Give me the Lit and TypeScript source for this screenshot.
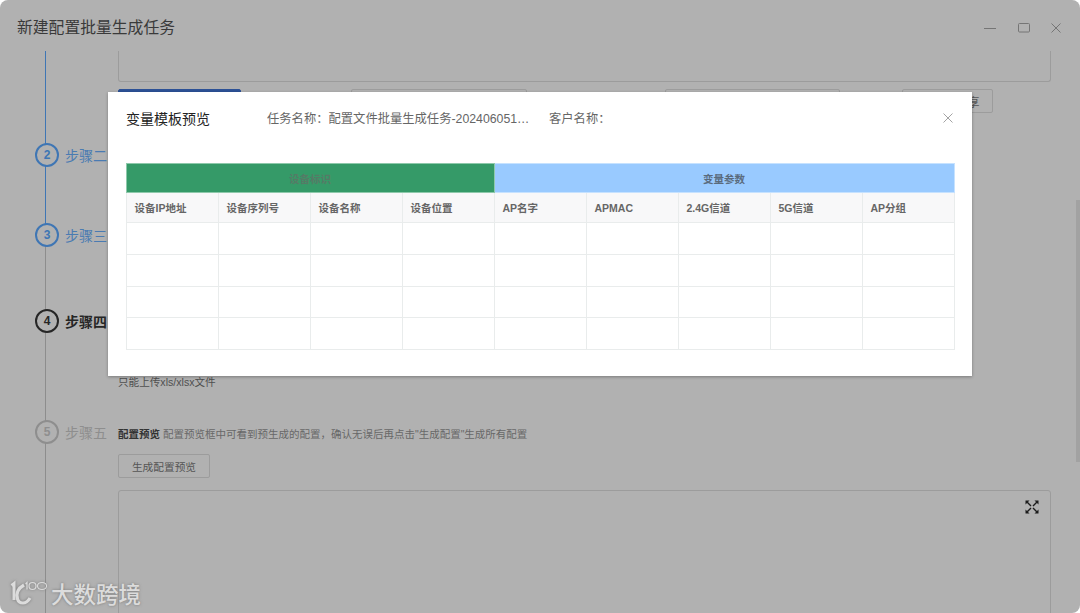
import { LitElement, css, html, svg } from "lit";
import { customElement } from "lit/decorators.js";

const columns = [
  "设备IP地址",
  "设备序列号",
  "设备名称",
  "设备位置",
  "AP名字",
  "APMAC",
  "2.4G信道",
  "5G信道",
  "AP分组",
];

const steps = [
  { n: 2, label: "步骤二", state: "done", gap: 0 },
  { n: 3, label: "步骤三", state: "done", gap: 58 },
  { n: 4, label: "步骤四", state: "active", gap: 64 },
  { n: 5, label: "步骤五", state: "todo", gap: 89 },
];

@customElement("app-root")
export class AppRoot extends LitElement {
  static styles = css`
    :host {
      display: block;
      position: relative;
      width: 1080px;
      height: 613px;
      overflow: hidden;
      background: #fff;
      font-family: "Liberation Sans", "Noto Sans CJK SC", sans-serif;
    }

    /* window behind the mask */
    .window {
      height: 613px;
      display: flex;
      flex-direction: column;
      background: #b1b1b1;
      border-radius: 8px;
      overflow: hidden;
    }
    .titlebar {
      flex: none;
      height: 51px;
      display: flex;
      align-items: center;
      padding: 4px 18px 0 17px;
      box-sizing: border-box;
    }
    .titlebar h1 {
      flex: 1;
      margin: -2px 0 0;
      font-size: 15.8px;
      font-weight: 400;
      color: #3a3a3a;
    }
    .controls {
      display: flex;
      align-items: center;
      gap: 20px;
    }
    .controls svg {
      display: block;
      width: 12px;
      height: 12px;
      fill: none;
      stroke: #757575;
      stroke-width: 1;
    }
    .controls svg:first-child {
      margin-right: 2px;
    }
    .body {
      flex: 1;
      display: flex;
      min-height: 0;
    }

    /* stepper */
    .rail {
      flex: none;
      width: 118px;
      position: relative;
      padding: 93px 0 0 35px;
      box-sizing: border-box;
    }
    .line {
      position: absolute;
      left: 45px;
      top: 0;
      bottom: 0;
      width: 1px;
      background: #8d8d8d;
    }
    .line::before {
      content: "";
      position: absolute;
      left: 0;
      top: 0;
      width: 1px;
      height: 190px;
      background: #3f76b4;
    }
    .step {
      position: relative;
      height: 22px;
      display: flex;
      align-items: center;
      gap: 6px;
      font-size: 14px;
      white-space: nowrap;
    }
    .num {
      flex: none;
      width: 20px;
      height: 20px;
      border: 2px solid;
      border-radius: 50%;
      background: #b1b1b1;
      display: flex;
      align-items: center;
      justify-content: center;
      font-size: 12px;
      font-weight: 700;
    }
    .step.done {
      color: #4a7bb2;
    }
    .step.done .num {
      border-color: #3f76b4;
      color: #3f76b4;
    }
    .step.active {
      color: #262626;
      font-weight: 700;
    }
    .step.active .num {
      border-color: #262626;
      color: #262626;
    }
    .step.todo {
      color: #8e8e8e;
    }
    .step.todo .num {
      border-color: #8e8e8e;
      color: #8e8e8e;
    }

    /* page content behind the mask */
    .content {
      flex: none;
      width: 933px;
      font-size: 12px;
      color: #5c5c5c;
    }
    .box {
      border: 1px solid #9c9c9c;
      border-radius: 3px;
      box-sizing: border-box;
    }
    .box.top {
      height: 31px;
      border-top: 0;
      border-radius: 0 0 3px 3px;
    }
    .actions {
      position: relative;
      height: 24px;
      margin-top: 7px;
      display: flex;
    }
    .btn {
      height: 24px;
      box-sizing: border-box;
      border: 1px solid #9c9c9c;
      border-radius: 2px;
      background: transparent;
      color: #555;
      font: inherit;
      padding: 0;
    }
    .actions .primary {
      width: 123px;
      border-color: #2c5196;
      background: #2c5196;
    }
    .actions .second {
      width: 176px;
      margin-left: 110px;
    }
    .actions .third {
      width: 175px;
      margin-left: 138px;
    }
    .actions .fourth {
      width: 91px;
      margin-left: 62px;
      padding-left: 52px;
      text-align: center;
    }
    .hint {
      margin: 261px 0 0;
      line-height: 16px;
      font-size: 10.6px;
      color: #4f4f4f;
    }
    .desc {
      margin: 36px 0 0;
      line-height: 16px;
      font-size: 10.5px;
      color: #686868;
    }
    .desc b {
      color: #333;
    }
    .content > .btn {
      display: block;
      width: 92px;
      margin-top: 12px;
      font-size: 10.7px;
    }
    .box.preview {
      position: relative;
      height: 140px;
      margin-top: 12px;
    }
    .expand {
      position: absolute;
      right: 11px;
      top: 9px;
      width: 14px;
      height: 14px;
      display: block;
      fill: #1c1c1c;
    }
    .expand path + path {
      fill: none;
      stroke: #1c1c1c;
      stroke-width: 1.4;
    }

    .scrollbar {
      position: absolute;
      right: 0;
      top: 200px;
      width: 4px;
      height: 262px;
      background: #a2a2a2;
    }

    /* watermark */
    .mark {
      position: absolute;
      left: 9px;
      bottom: 7px;
      display: flex;
      align-items: center;
      gap: 4px;
      color: #dcdcdc;
      text-shadow: 0 0 3px #777;
      font-size: 22.5px;
      line-height: 26px;
      font-family: "Noto Sans CJK SC", sans-serif;
      font-weight: 500;
    }
    .mark svg {
      display: block;
      width: 38px;
      height: 26px;
      fill: none;
      stroke: #dcdcdc;
      filter: drop-shadow(0 0 1.5px #777);
    }

    /* modal */
    .modal {
      position: absolute;
      left: 108px;
      top: 92px;
      width: 864px;
      height: 284px;
      box-sizing: border-box;
      padding: 0 18px;
      background: #fff;
      box-shadow: 0 1px 3px rgba(0, 0, 0, 0.3);
    }
    .modal header {
      height: 71px;
      display: flex;
      align-items: center;
      padding-bottom: 20px;
      box-sizing: border-box;
      font-size: 12.3px;
      color: #666;
      white-space: nowrap;
    }
    .modal h2 {
      margin: 0 57px 0 0;
      font-size: 14px;
      font-weight: 400;
      color: #222;
    }
    .task {
      width: 264px;
      margin-right: 18px;
    }
    .customer {
      flex: 1;
    }
    .close {
      display: block;
      width: 10px;
      height: 10px;
      margin-right: 1px;
      fill: none;
      stroke: #a3a3a3;
      stroke-width: 1;
    }

    table {
      width: 829px;
      margin-left: -0.5px;
      border-collapse: collapse;
      table-layout: fixed;
      font-size: 10.5px;
      color: #666;
    }
    th,
    td {
      border: 1px solid #e9ecec;
      padding: 0 8px;
      text-align: left;
      font-weight: 700;
      box-sizing: border-box;
    }
    .groups th {
      height: 29px;
      text-align: center;
      border-color: #c6e2ff;
    }
    .groups .device {
      background: #359a68;
      border-color: #8ec9ab;
      color: #557a66;
    }
    .groups .vars {
      background: #99caff;
      color: #5a6b7d;
    }
    .heads th {
      height: 30px;
      background: #f8f8f9;
    }
    .rows td {
      height: 32px;
    }
    .rows:nth-child(3) td {
      height: 31px;
    }
  `;

  private renderStep(s: (typeof steps)[number]) {
    return html`<div class="step ${s.state}" style="margin-top:${s.gap}px">
      <span class="num">${s.n}</span><span>${s.label}</span>
    </div>`;
  }

  private renderLogo() {
    return html`<svg viewBox="0 0 38 26" aria-hidden="true">
      ${svg`
        <path stroke-width="3" d="M2.5 5.5 L5 3.5 L5 20" />
        <path stroke-width="3.2" d="M15 5 C8 9 7 14 8.5 19 C10 24 17 25 21 18" />
        <path stroke-width="1.2" d="M16.5 4 L18 2.5 V9.5" />
        <circle stroke-width="1.2" cx="23.5" cy="6" r="3.5" />
        <ellipse stroke-width="1.2" cx="33" cy="6" rx="4.5" ry="3.5" />
      `}
    </svg>`;
  }

  render() {
    return html`
      <div class="window">
        <div class="titlebar">
          <h1>新建配置批量生成任务</h1>
          <div class="controls">
            <svg viewBox="0 0 12 12"><path d="M0 6.5H12" /></svg>
            <svg viewBox="0 0 12 12"><rect x="0.5" y="1.5" width="11" height="8.5" rx="1" /></svg>
            <svg viewBox="0 0 12 12"><path d="M1.5 1.5L10.5 10.5M10.5 1.5L1.5 10.5" /></svg>
          </div>
        </div>
        <div class="body">
          <div class="rail">
            <div class="line"></div>
            ${steps.map((s) => this.renderStep(s))}
          </div>
          <div class="content">
            <div class="box top"></div>
            <div class="actions">
              <button class="btn primary"></button>
              <button class="btn second"></button>
              <button class="btn third"></button>
              <button class="btn fourth">享</button>
            </div>
            <p class="hint">只能上传xls/xlsx文件</p>
            <p class="desc">
              <b>配置预览</b> 配置预览框中可看到预生成的配置，确认无误后再点击"生成配置"生成所有配置
            </p>
            <button class="btn">生成配置预览</button>
            <div class="box preview">
              <svg class="expand" viewBox="0 0 14 14">
                <path d="M0.5 0.5H4.5L0.5 4.5ZM13.5 0.5H9.5L13.5 4.5ZM0.5 13.5H4.5L0.5 9.5ZM13.5 13.5H9.5L13.5 9.5Z" />
                <path d="M2 2L6 6M12 2L8 6M2 12L6 8M12 12L8 8" />
              </svg>
            </div>
          </div>
        </div>
      </div>
      <div class="scrollbar"></div>
      <div class="mark">${this.renderLogo()}<span>大数跨境</span></div>

      <section class="modal">
        <header>
          <h2>变量模板预览</h2>
          <span class="task">任务名称：配置文件批量生成任务-202406051…</span>
          <span class="customer">客户名称：</span>
          <svg class="close" viewBox="0 0 10 10"><path d="M0.5 0.5L9.5 9.5M9.5 0.5L0.5 9.5" /></svg>
        </header>
        <table>
          <thead>
            <tr class="groups">
              <th class="device" colspan="4">设备标识</th>
              <th class="vars" colspan="5">变量参数</th>
            </tr>
            <tr class="heads">
              ${columns.map((c) => html`<th>${c}</th>`)}
            </tr>
          </thead>
          <tbody>
            ${[0, 1, 2, 3].map(
              () => html`<tr class="rows">${columns.map(() => html`<td></td>`)}</tr>`
            )}
          </tbody>
        </table>
      </section>
    `;
  }
}
